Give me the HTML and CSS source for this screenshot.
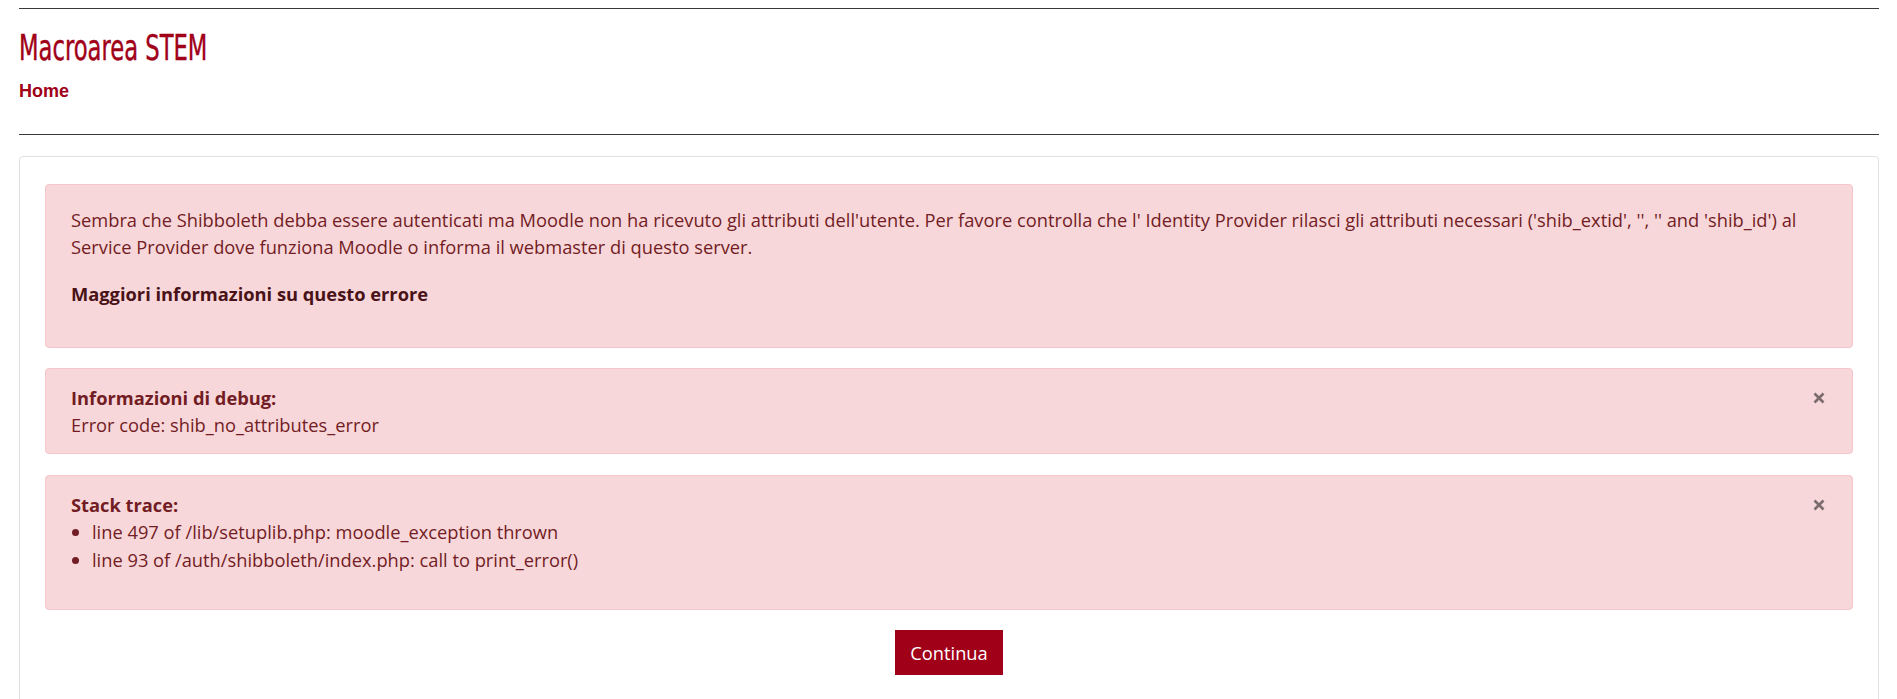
FILE: index.html
```html
<!DOCTYPE html>
<html lang="it">
<head>
<meta charset="utf-8">
<title>Macroarea STEM</title>
<link rel="stylesheet" href="styles.css">
</head>
<body>
<div class="page">
  <header class="page-header">
    <h1 class="site-title"><span class="site-title-text">Macroarea STEM</span></h1>
    <nav class="breadcrumb"><a href="#">Home</a></nav>
  </header>
  <main class="card">
    <div class="alert">
      <p>Sembra che Shibboleth debba essere autenticati ma Moodle non ha ricevuto gli attributi dell'utente. Per favore controlla che l' Identity Provider rilasci gli attributi necessari ('shib_extid', '', '' and 'shib_id') al Service Provider dove funziona Moodle o informa il webmaster di questo server.</p>
      <p><a class="alert-link" href="#">Maggiori informazioni su questo errore</a></p>
    </div>
    <div class="alert alert-dismissible">
      <button class="close" type="button" aria-label="Chiudi"><svg width="12" height="12" viewBox="0 0 12 12"><path d="M1.5 1.5 L10.5 10.5 M10.5 1.5 L1.5 10.5" stroke="currentColor" stroke-width="2.6" stroke-linecap="butt"/></svg></button>
      <p><strong>Informazioni di debug:</strong><br>Error code: shib_no_attributes_error</p>
    </div>
    <div class="alert alert-dismissible">
      <button class="close" type="button" aria-label="Chiudi"><svg width="12" height="12" viewBox="0 0 12 12"><path d="M1.5 1.5 L10.5 10.5 M10.5 1.5 L1.5 10.5" stroke="currentColor" stroke-width="2.6" stroke-linecap="butt"/></svg></button>
      <strong>Stack trace:</strong>
      <ul class="trace">
        <li>line 497 of /lib/setuplib.php: moodle_exception thrown</li>
        <li>line 93 of /auth/shibboleth/index.php: call to print_error()</li>
      </ul>
    </div>
    <div class="actions">
      <button class="btn" type="button">Continua</button>
    </div>
  </main>
</div>
</body>
</html>
```

FILE: styles.css
```css
* { box-sizing: border-box; }

html, body {
  margin: 0;
  background: #ffffff;
}

body {
  font-family: "Open Sans", "Noto Sans", sans-serif;
  font-size: 18.3px;
  line-height: 27px;
  color: #1d2125;
}

.page {
  padding: 8px 18px 0 19px;
}

.page-header {
  border-top: 1px solid #3a3a3a;
  border-bottom: 1px solid #3a3a3a;
  padding: 18px 0 29px;
}

.site-title {
  margin: 0;
  font-family: "Liberation Sans Narrow", "DejaVu Sans Condensed", "Liberation Sans", sans-serif;
  font-weight: 400;
  font-size: 35px;
  line-height: 42px;
  color: #a00018;
}

.site-title-text {
  display: inline-block;
  transform: scaleX(0.72);
  transform-origin: left center;
  -webkit-text-stroke: 0.4px #a00018;
}

.breadcrumb {
  margin-top: 9px;
  font-family: "Liberation Sans", Arial, sans-serif;
  font-weight: 700;
  font-size: 18px;
  line-height: 27px;
}

.breadcrumb a {
  color: #a00018;
  text-decoration: none;
}

.card {
  display: block;
  margin-top: 21px;
  border: 1px solid #dee2e6;
  border-radius: 4px;
  padding: 27px 25px 24px;
  min-height: 560px;
}

.alert {
  position: relative;
  background: #f8d7da;
  border: 1px solid #f5c6cb;
  border-radius: 4px;
  color: #721c24;
  padding: 15px 25px;
  margin-bottom: 20px;
}

.alert:first-child {
  padding: 21px 25px 20px;
}

.alert-dismissible + .alert-dismissible {
  margin-top: 21px;
}

.alert p {
  margin: 0 0 20px;
}

.alert-dismissible p {
  margin: 0;
}

.alert strong {
  font-weight: 700;
}

.alert-link {
  color: #491217;
  font-weight: 700;
  text-decoration: none;
}

.close {
  position: absolute;
  top: 23px;
  right: 27px;
  width: 12px;
  height: 12px;
  padding: 0;
  border: 0;
  background: none;
  color: rgba(0, 0, 0, 0.5);
  display: flex;
  cursor: pointer;
}

.trace {
  margin: 0 0 20px;
  padding-left: 21px;
}

.trace li {
  line-height: 28px;
}

.actions {
  display: flex;
  justify-content: center;
}

.btn {
  font-family: "Open Sans", "Noto Sans", sans-serif;
  font-size: 18.3px;
  line-height: 27px;
  color: #ffffff;
  background: #a00018;
  border: 1px solid #a00018;
  border-radius: 0;
  padding: 8px 14px;
  cursor: pointer;
}
```
